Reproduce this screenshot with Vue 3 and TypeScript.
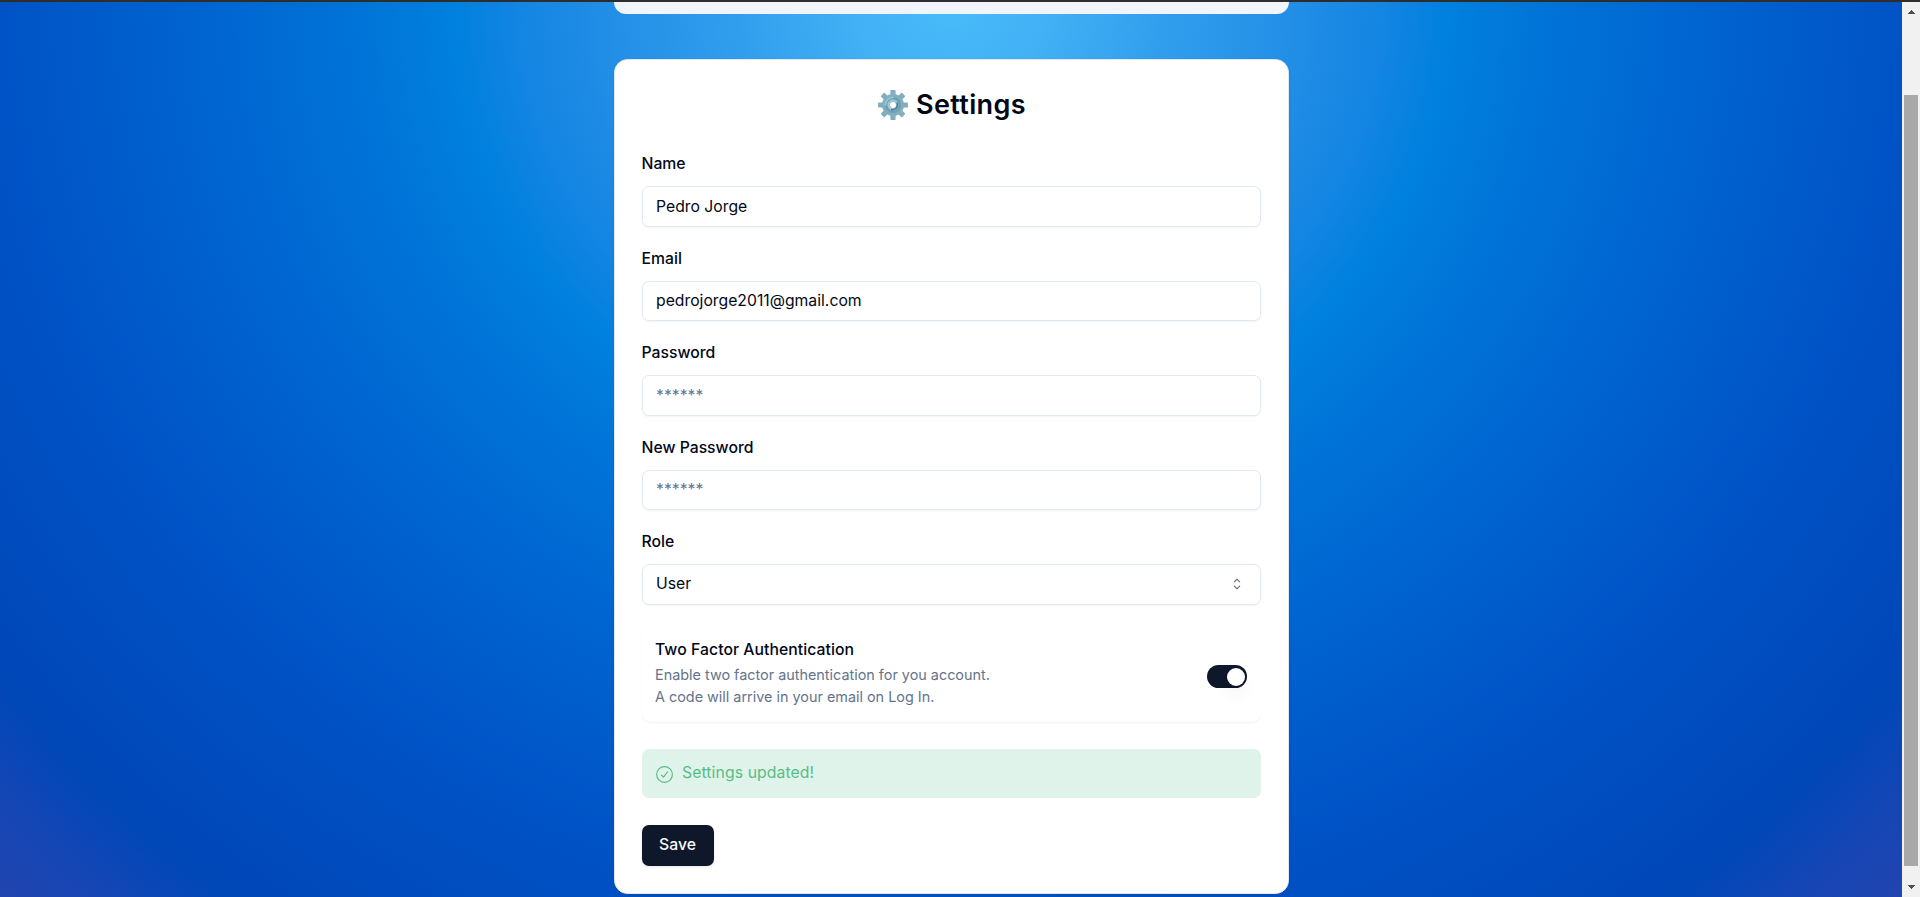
<script setup lang="ts">
import { ref } from 'vue'

interface Field {
  id: string
  label: string
  type: string
  placeholder: string
  value: string
}

const fields = ref<Field[]>([
  { id: 'name', label: 'Name', type: 'text', placeholder: '', value: 'Pedro Jorge' },
  { id: 'email', label: 'Email', type: 'text', placeholder: '', value: 'pedrojorge2011@gmail.com' },
  { id: 'password', label: 'Password', type: 'password', placeholder: '******', value: '' },
  { id: 'new-password', label: 'New Password', type: 'password', placeholder: '******', value: '' },
])
const twoFactor = ref(true)
</script>

<template>
  <div class="window">
    <div class="edge"></div>
    <div class="viewport">
      <main class="page">
        <nav class="navbar"></nav>
        <section class="card">
          <h1 class="title">
            <svg class="gear" viewBox="0 0 30 30">
              <g fill="#82aec0">
                <rect v-for="n in 4" :key="n" x="12.4" y="0" width="5.2" height="30" rx="0.8" :transform="`rotate(${n * 45} 15 15)`" />
                <circle cx="15" cy="15" r="11" />
              </g>
              <circle cx="15" cy="15" r="7" fill="none" stroke="#6d9fb2" stroke-width="2" />
              <path d="M7.4 15A7.6 7.6 0 0 1 15 7.4" fill="none" stroke="#93cbdb" stroke-width="1.5" stroke-linecap="round" />
              <circle cx="15" cy="15" r="4.4" fill="none" stroke="#a5cbd7" stroke-width="1.8" />
              <path d="M19 12.5A5 5 0 0 1 13 19.5" fill="none" stroke="#437f94" stroke-width="1.4" />
              <circle cx="15" cy="15" r="3" fill="#fff" />
            </svg>
            <span>Settings</span>
          </h1>
          <form class="form" @submit.prevent>
            <div v-for="field in fields" :key="field.id" class="field">
              <label :for="field.id">{{ field.label }}</label>
              <input :id="field.id" v-model="field.value" class="control" :type="field.type" :placeholder="field.placeholder" />
            </div>
            <div class="field">
              <label>Role</label>
              <button type="button" class="control select">
                <span>User</span>
                <svg class="chevrons" viewBox="0 0 15 15">
                  <path d="M4.93179 5.43179C4.75605 5.60753 4.75605 5.89245 4.93179 6.06819C5.10753 6.24392 5.39245 6.24392 5.56819 6.06819L7.49999 4.13638L9.43179 6.06819C9.60753 6.24392 9.89245 6.24392 10.0682 6.06819C10.2439 5.89245 10.2439 5.60753 10.0682 5.43179L7.81819 3.18179C7.73379 3.0974 7.61933 3.04999 7.49999 3.04999C7.38064 3.04999 7.26618 3.0974 7.18179 3.18179L4.93179 5.43179ZM10.0682 9.56819C10.2439 9.39245 10.2439 9.10753 10.0682 8.93179C9.89245 8.75606 9.60753 8.75606 9.43179 8.93179L7.49999 10.8636L5.56819 8.93179C5.39245 8.75606 5.10753 8.75606 4.93179 8.93179C4.75605 9.10753 4.75605 9.39245 4.93179 9.56819L7.18179 11.8182C7.35753 11.9939 7.64245 11.9939 7.81819 11.8182L10.0682 9.56819Z" fill="currentColor" fill-rule="evenodd" clip-rule="evenodd" />
                </svg>
              </button>
            </div>
            <div class="option">
              <div class="option-text">
                <span class="option-label">Two Factor Authentication</span>
                <p>Enable two factor authentication for you account.<br />A code will arrive in your email on Log In.</p>
              </div>
              <button type="button" class="switch" :class="{ on: twoFactor }" role="switch" :aria-checked="twoFactor" @click="twoFactor = !twoFactor">
                <span class="thumb"></span>
              </button>
            </div>
            <div class="success">
              <svg class="check" viewBox="0 0 16 16" fill="none" stroke="currentColor" stroke-linecap="round" stroke-linejoin="round">
                <circle cx="8" cy="8" r="7.4" stroke-width="1.1" />
                <path d="M5 8.5L7.1 10.5L10.9 5.4" stroke-width="1.1" />
              </svg>
              <span>Settings updated!</span>
            </div>
            <button type="submit" class="save">Save</button>
          </form>
        </section>
      </main>
      <aside class="scrollbar">
        <svg class="arrow" viewBox="0 0 8 4" shape-rendering="crispEdges"><path d="M0 4L4 0L8 4Z" fill="#505050" /></svg>
        <div class="scroll-thumb"></div>
        <svg class="arrow" viewBox="0 0 8 4" shape-rendering="crispEdges"><path d="M0 0L4 4L8 0Z" fill="#505050" /></svg>
      </aside>
    </div>
  </div>
</template>

<style>
body {
  margin: 0;
  overflow: hidden;
}
</style>

<style scoped>
* {
  box-sizing: border-box;
}
.window {
  height: 897px;
  display: flex;
  flex-direction: column;
  overflow: hidden;
  font-family: Inter, "Liberation Sans", sans-serif;
  font-size: 15.75px;
  line-height: 22.5px;
  color: #020817;
}
.edge {
  flex: none;
  height: 2px;
  background: #2d2d2d;
}
.viewport {
  flex: 1;
  min-height: 0;
  display: flex;
}
.page {
  flex: 1;
  min-width: 0;
  display: flex;
  flex-direction: column;
  align-items: center;
  gap: 45px;
  background: radial-gradient(ellipse farthest-corner at 50% 0, #48bcfa 0%, #42b1f5 7%, #319eed 16%, #238fe7 25%, #1485e2 32%, #0080df 37%, #0074d8 44%, #0062cf 57.5%, #0052c5 71.5%, #0047b8 88.5%, #1546b4 94.5%, #2244b0 100%);
}
.navbar {
  flex: none;
  width: 675px;
  height: 12px;
  border-radius: 0 0 13.5px 13.5px;
  background: #f1f5f9;
}
.card {
  flex: none;
  width: 675px;
  height: 835px;
  padding: 27px;
  border: 1px solid #e2e8f0;
  border-radius: 13.5px;
  background: #fff;
  box-shadow: 0 1px 3px rgba(0, 0, 0, 0.1);
}
.title {
  display: flex;
  align-items: center;
  justify-content: center;
  gap: 8px;
  height: 36px;
  margin: 0 0 27px;
  padding-left: 2px;
  font-size: 27px;
  line-height: 36px;
  font-weight: 600;
  letter-spacing: 0.35px;
}
.gear {
  width: 30px;
  height: 30px;
}
.form {
  display: flex;
  flex-direction: column;
}
.field {
  display: flex;
  flex-direction: column;
  gap: 9px;
  height: 94.5px;
}
.field label {
  line-height: 27px;
  font-weight: 500;
}
.control {
  width: 100%;
  height: 40.5px;
  padding: 0 13.5px;
  border: 1px solid #e2e8f0;
  border-radius: 7px;
  outline: none;
  background: transparent;
  box-shadow: 0 1px 2px rgba(0, 0, 0, 0.05);
  font: inherit;
  color: inherit;
}
.control::placeholder {
  color: #64748b;
  opacity: 1;
}
.select {
  display: flex;
  align-items: center;
  justify-content: space-between;
}
.chevrons {
  width: 18px;
  height: 18px;
  opacity: 0.6;
}
.option {
  display: flex;
  align-items: center;
  justify-content: space-between;
  height: 99.5px;
  margin-bottom: 27px;
  padding: 2px 13.5px 0;
  border-radius: 9px;
  box-shadow: 0 1px 2px rgba(0, 0, 0, 0.05);
}
.option-label {
  display: block;
  font-weight: 500;
  letter-spacing: 0.05px;
}
.option p {
  margin: 3px 0 0;
  font-size: 14.4px;
  line-height: 22px;
  color: #64748b;
}
.switch {
  display: flex;
  align-items: center;
  width: 40.5px;
  height: 23px;
  margin-top: 7px;
  padding: 0 2px;
  border: 0;
  border-radius: 12px;
  background: #e2e8f0;
}
.switch.on {
  justify-content: flex-end;
  background: #0f172a;
}
.thumb {
  width: 18px;
  height: 18px;
  border-radius: 50%;
  background: #fff;
  box-shadow: 0 11px 17px -3px rgba(0, 0, 0, 0.1), 0 4px 7px -4px rgba(0, 0, 0, 0.1);
}
.success {
  display: flex;
  align-items: center;
  gap: 9.5px;
  height: 49px;
  margin-bottom: 27px;
  padding: 0 14px;
  border-radius: 7px;
  background: #e0f3ea;
  color: #58bd85;
  letter-spacing: 0.1px;
}
.check {
  width: 17px;
  height: 17px;
  margin-top: 1px;
}
.save {
  align-self: flex-start;
  width: 72px;
  height: 41px;
  padding: 0;
  border: 0;
  border-radius: 7px;
  background: #0f172a;
  box-shadow: 0 1px 3px rgba(0, 0, 0, 0.1);
  font: inherit;
  font-weight: 500;
  color: #f8fafc;
}
.scrollbar {
  flex: none;
  display: flex;
  flex-direction: column;
  justify-content: space-between;
  align-items: center;
  width: 18px;
  padding: 8px 0;
  background: #f1f1f1;
}
.arrow {
  width: 8px;
  height: 4px;
}
.scroll-thumb {
  width: 14px;
  height: 771px;
  margin: 81px 0 19px;
  background: #a8a8a8;
}
</style>
